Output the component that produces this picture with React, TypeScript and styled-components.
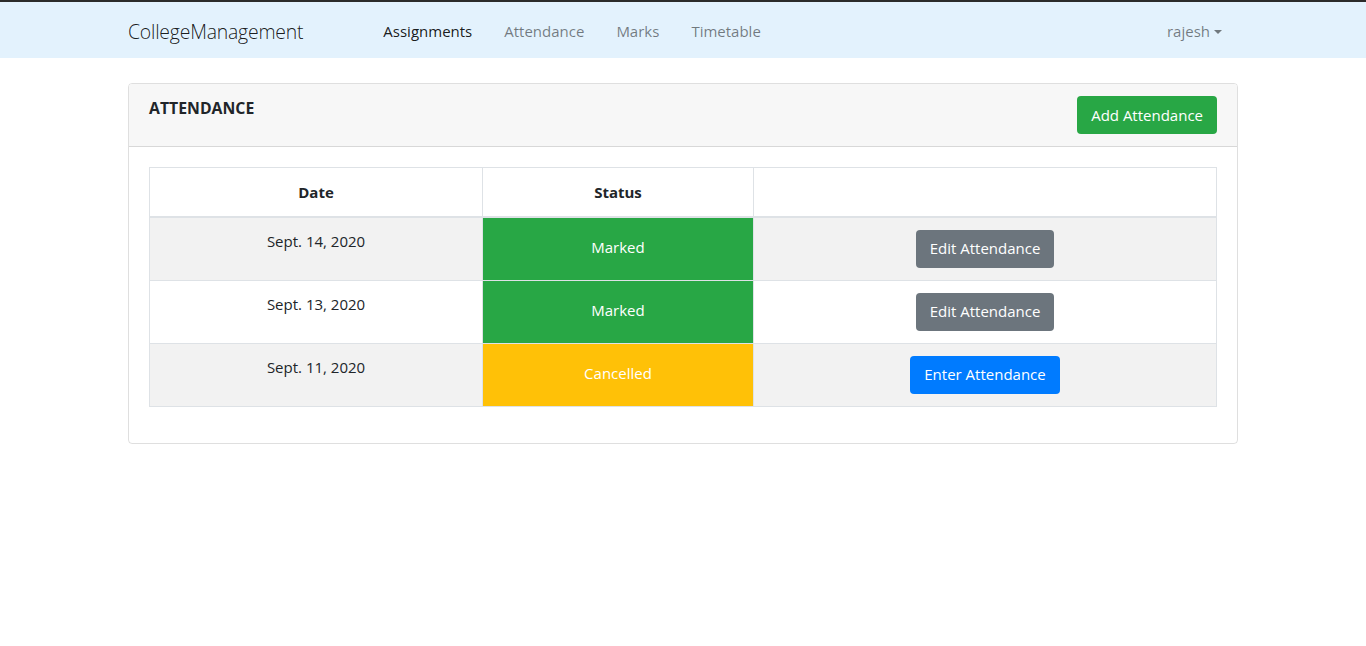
import React from 'react'
import styled, { createGlobalStyle } from 'styled-components'

const GlobalStyle = createGlobalStyle`
    * { box-sizing: border-box; }
    body {
        margin: 0;
        font-family: "Open Sans", "Noto Sans", sans-serif;
        font-size: 15px;
        line-height: 1.5;
        color: #212529;
        background: #fff;
    }
`

const TopEdge = styled.div`
    height: 2px;
    background: #2b2b2b;
`

const NavBar = styled.nav`
    background: #e3f2fd;
    height: 56px;
`

const Container = styled.div`
    max-width: 1140px;
    margin: 0 auto;
    padding: 0 15px;
    height: 100%;
`

const NavInner = styled(Container)`
    display: flex;
    align-items: center;
    padding-top: 3px;
`

const Brand = styled.a`
    font-size: 19.4px;
    font-weight: 300;
    color: rgba(0, 0, 0, .9);
    text-decoration: none;
    margin-right: 64px;
    letter-spacing: -0.2px;
`

const NavLinks = styled.div`
    display: flex;
    flex: 1;
`

const NavLink = styled.a<{ $active?: boolean }>`
    padding: 8px 16px;
    color: ${p => p.$active ? 'rgba(0, 0, 0, .9)' : 'rgba(0, 0, 0, .5)'};
    text-decoration: none;
    cursor: pointer;
`

const Dropdown = styled(NavLink)`
    display: flex;
    align-items: center;
    &::after {
        content: '';
        margin-left: 4px;
        border-top: 4.5px solid;
        border-left: 4px solid transparent;
        border-right: 4px solid transparent;
    }
`

const Card = styled.div`
    margin-top: 25px;
    border: 1px solid rgba(0, 0, 0, .125);
    border-radius: 4px;
    overflow: hidden;
`

const CardHeader = styled.div`
    display: flex;
    justify-content: space-between;
    align-items: flex-start;
    padding: 12px 20px;
    background: #f7f7f7;
    border-bottom: 1px solid rgba(0, 0, 0, .125);
`

const Title = styled.h5`
    margin: 0;
    font-size: 15.8px;
    font-weight: 700;
    line-height: 24px;
`

const Button = styled.button<{ $variant: 'success' | 'secondary' | 'primary' }>`
    height: 38px;
    padding: 0 13px;
    font-family: inherit;
    font-size: 15px;
    line-height: 1.5;
    color: #fff;
    border: 1px solid transparent;
    border-radius: 4px;
    cursor: pointer;
    background: ${p => ({ success: '#28a745', secondary: '#6c757d', primary: '#007bff' }[p.$variant])};
`

const CardBody = styled.div`
    padding: 20px;
`

const Table = styled.table`
    width: 100%;
    border-collapse: collapse;
    margin-bottom: 16px;
    text-align: center;
    th, td {
        border: 1px solid #dee2e6;
        padding: 12px;
        vertical-align: top;
    }
    th {
        font-weight: 700;
        padding-top: 13px;
        border-bottom-width: 2px;
    }
    tbody tr:nth-child(odd) {
        background: rgba(0, 0, 0, .05);
    }
`

const StatusCell = styled.td<{ $status: string }>`
    color: #fff;
    padding-top: 18px !important;
    padding-bottom: 6px !important;
    background: ${p => p.$status === 'Marked' ? '#28a745' : '#ffc107'};
`

const rows = [
    { date: 'Sept. 14, 2020', status: 'Marked' },
    { date: 'Sept. 13, 2020', status: 'Marked' },
    { date: 'Sept. 11, 2020', status: 'Cancelled' },
]

const App = () => {
    return (
        <>
            <GlobalStyle />
            <TopEdge />
            <NavBar>
                <NavInner>
                    <Brand href="#">CollegeManagement</Brand>
                    <NavLinks>
                        <NavLink $active>Assignments</NavLink>
                        <NavLink>Attendance</NavLink>
                        <NavLink>Marks</NavLink>
                        <NavLink>Timetable</NavLink>
                    </NavLinks>
                    <Dropdown>rajesh</Dropdown>
                </NavInner>
            </NavBar>
            <Container>
                <Card>
                    <CardHeader>
                        <Title>ATTENDANCE</Title>
                        <Button $variant="success">Add Attendance</Button>
                    </CardHeader>
                    <CardBody>
                        <Table>
                            <colgroup>
                                <col style={{ width: 333 }} />
                                <col style={{ width: 271 }} />
                                <col />
                            </colgroup>
                            <thead>
                                <tr>
                                    <th>Date</th>
                                    <th>Status</th>
                                    <th></th>
                                </tr>
                            </thead>
                            <tbody>
                                {rows.map(r => (
                                    <tr key={r.date}>
                                        <td>{r.date}</td>
                                        <StatusCell $status={r.status}>{r.status}</StatusCell>
                                        <td>
                                            {r.status === 'Marked'
                                                ? <Button $variant="secondary">Edit Attendance</Button>
                                                : <Button $variant="primary">Enter Attendance</Button>}
                                        </td>
                                    </tr>
                                ))}
                            </tbody>
                        </Table>
                    </CardBody>
                </Card>
            </Container>
        </>
    )
}

export default App
